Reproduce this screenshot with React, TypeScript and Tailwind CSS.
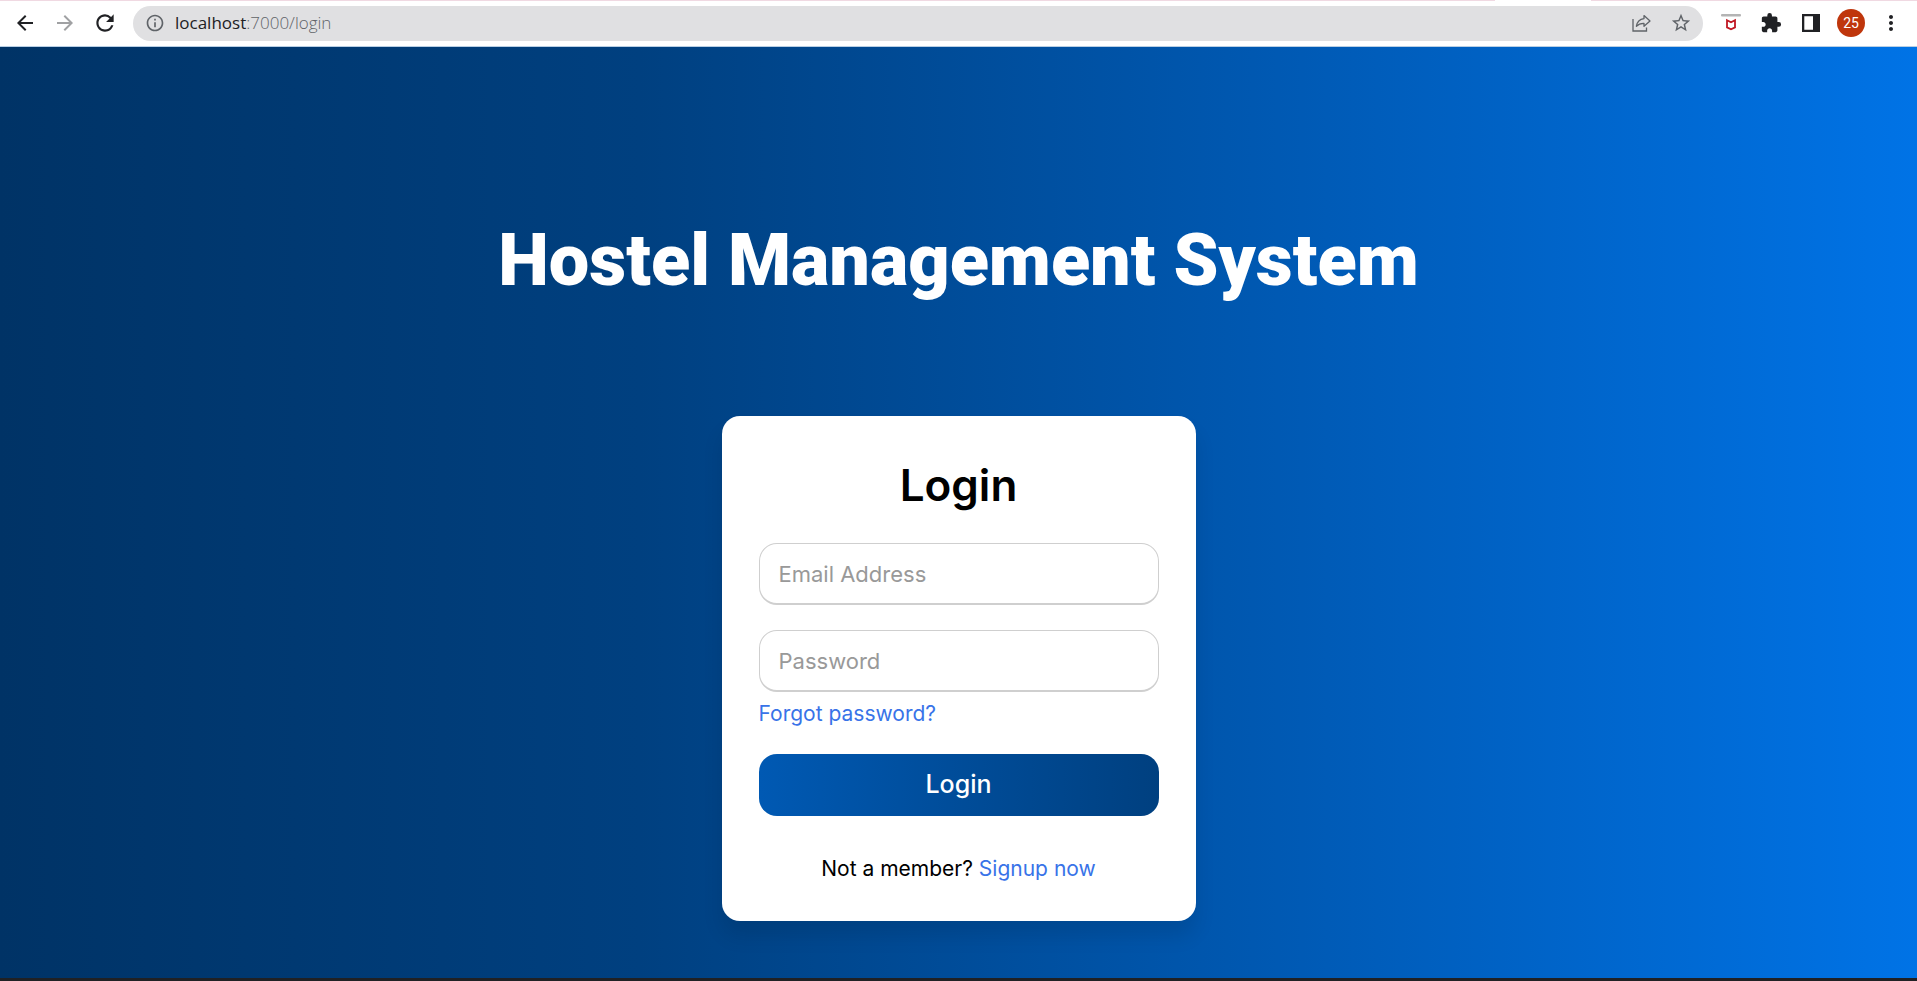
import React from "react";
import {
  MdArrowBack,
  MdArrowForward,
  MdRefresh,
  MdInfoOutline,
  MdStarBorder,
  MdExtension,
  MdMoreVert,
} from "react-icons/md";

function ToolbarButton({
  label,
  className = "",
  children,
}: {
  label: string;
  className?: string;
  children: React.ReactNode;
}) {
  return (
    <button
      type="button"
      aria-label={label}
      className={`flex h-8 w-10 shrink-0 items-center justify-center ${className}`}
    >
      {children}
    </button>
  );
}

function ShareIcon() {
  return (
    <svg width="19" height="18" viewBox="0 0 19 18" fill="none" stroke="#5f6368" strokeWidth="1.3">
      <path d="M1 5v12h13.5v-3.5" />
      <path d="M12 1.6 18 7l-6 5.2V9.4c-3.4-.1-5.6.7-7.6 2.8.6-4 3-7 7.6-7.6z" strokeLinejoin="round" />
    </svg>
  );
}

function ShieldIcon() {
  return (
    <svg width="20" height="20" viewBox="0 0 20 20">
      <rect x="0" y="1" width="20" height="2.6" rx="1" fill="#b4b4b4" />
      <path
        d="M6 7.2l4 2 4-2v7.2l-4 1.800-4-1.800z"
        fill="none"
        stroke="#c01722"
        strokeWidth="1.800"
      />
    </svg>
  );
}

function SidePanelIcon() {
  return (
    <svg width="18" height="18" viewBox="0 0 18 18">
      <path fill="#202124" fillRule="evenodd" d="M0 0h18v18H0zM2.3 2.3v13.4h8.7V2.3z" />
    </svg>
  );
}

function BrowserBar() {
  return (
    <header className="bg-white">
      <div className="flex h-px">
        <div className="w-[78%] bg-[#f0d9e2]" />
        <div className="w-[5%] bg-white" />
        <div className="flex-1 bg-[#f0d9e2]" />
      </div>
      <div className="flex h-[46px] items-center border-b border-[#b9cfe4] pr-1.5 pb-px pl-[5px] text-[#202124]">
        <ToolbarButton label="Back">
          <MdArrowBack size={24} />
        </ToolbarButton>
        <ToolbarButton label="Forward" className="text-[#a0a1a3]">
          <MdArrowForward size={24} />
        </ToolbarButton>
        <ToolbarButton label="Reload">
          <MdRefresh size={26} />
        </ToolbarButton>
        <div className="mr-2 ml-2 flex h-[35px] flex-1 items-center rounded-full bg-[#e0e0e2] pr-0.5 pl-3 text-[#5f6368]">
          <MdInfoOutline size={20} />
          <div className="ml-2.5 flex-1 font-['Open_Sans','Noto_Sans',sans-serif] text-[17px]">
            <span className="text-[#202124]">localhost</span>
            <span className="font-light">:7000/login</span>
          </div>
          <ToolbarButton label="Share">
            <ShareIcon />
          </ToolbarButton>
          <ToolbarButton label="Bookmark">
            <MdStarBorder size={22} />
          </ToolbarButton>
        </div>
        <ToolbarButton label="Web protection">
          <ShieldIcon />
        </ToolbarButton>
        <ToolbarButton label="Extensions">
          <MdExtension size={22} />
        </ToolbarButton>
        <ToolbarButton label="Side panel">
          <SidePanelIcon />
        </ToolbarButton>
        <ToolbarButton label="Profile">
          <span className="flex size-7 items-center justify-center rounded-full bg-[#bf360c] font-['Roboto',sans-serif] text-sm text-white">
            25
          </span>
        </ToolbarButton>
        <ToolbarButton label="Menu">
          <MdMoreVert size={24} />
        </ToolbarButton>
      </div>
    </header>
  );
}

const fieldClass =
  "h-[62px] w-full rounded-[18px] border border-b-2 border-[#cfcfcf] bg-white px-[19px] text-[22px] text-black outline-none placeholder:text-[#999999]";

function LoginCard() {
  return (
    <section className="w-[474px] max-w-full rounded-[18px] bg-white px-[37px] pt-9 pb-9 font-['Inter',sans-serif] shadow-[0_15px_20px_rgba(0,0,0,0.1)]">
      <h2 className="text-center text-[44px] leading-[66px] font-semibold text-black">Login</h2>
      <form className="mt-[25px]" onSubmit={(e) => e.preventDefault()}>
        <input type="email" aria-label="Email Address" placeholder="Email Address" className={fieldClass} />
        <input
          type="password"
          aria-label="Password"
          placeholder="Password"
          className={`mt-[25px] ${fieldClass}`}
        />
        <div className="mt-1.5 text-[21px] leading-8">
          <a href="#forgot" className="text-[#3873e8]">
            Forgot password?
          </a>
        </div>
        <button
          type="submit"
          className="mt-6 h-[62px] w-full rounded-[18px] bg-linear-to-r from-[#0059b3] to-[#004080] text-[25px] font-medium text-white"
        >
          Login
        </button>
        <p className="mt-[37px] text-center text-[21px] leading-8 text-black">
          Not a member?{" "}
          <a href="#signup" className="text-[#3873e8]">
            Signup now
          </a>
        </p>
      </form>
    </section>
  );
}

export default function App() {
  return (
    <div className="flex min-h-screen flex-col">
      <BrowserBar />
      <main className="flex flex-1 flex-col items-center bg-[linear-gradient(to_right,#003366,#004080,#0059b3,#0073e6)] pt-[166px] pb-12">
        <h1 className="text-center font-['Roboto',sans-serif] text-[72px] leading-[96px] font-black text-white">
          Hostel Management System
        </h1>
        <div className="mt-[107px] flex w-full justify-center">
          <LoginCard />
        </div>
      </main>
      <footer className="h-[3px] bg-[#202124]" />
    </div>
  );
}
